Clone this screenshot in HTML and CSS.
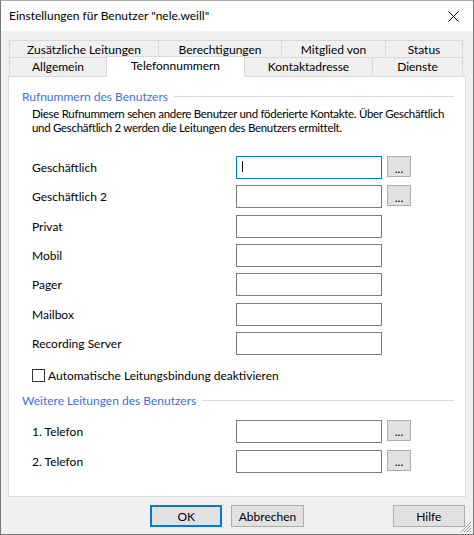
FILE: index.html
```html
<!DOCTYPE html>
<html lang="de">
<head>
  <meta charset="UTF-8" />
  <title>Einstellungen für Benutzer</title>
  <link rel="stylesheet" href="styles.css">
</head>
<body>

  <div class="dialog">

    <!-- Title bar -->
    <header class="titlebar">
      <span class="title">Einstellungen für Benutzer "nele.weill"</span>
      <button class="close" type="button" aria-label="Schließen">
        <svg width="11" height="11" viewBox="0 0 11 11">
          <path d="M0.5 0.5 L10.5 10.5 M10.5 0.5 L0.5 10.5" stroke="#000" stroke-width="1" fill="none" />
        </svg>
      </button>
    </header>

    <div class="dialog-body">

      <!-- Tabs -->
      <div class="tabs">
        <div class="tab-row row-back">
          <div class="tab">Zusätzliche Leitungen</div>
          <div class="tab">Berechtigungen</div>
          <div class="tab">Mitglied von</div>
          <div class="tab">Status</div>
        </div>
        <div class="tab-row row-front">
          <div class="tab">Allgemein</div>
          <div class="tab active">Telefonnummern</div>
          <div class="tab">Kontaktadresse</div>
          <div class="tab">Dienste</div>
        </div>
      </div>

      <!-- Tab page -->
      <section class="panel">
        <div class="group-title"><span>Rufnummern des Benutzers</span></div>
        <p class="hint">Diese Rufnummern sehen andere Benutzer und föderierte Kontakte. Über Geschäftlich<br>und Geschäftlich 2 werden die Leitungen des Benutzers ermittelt.</p>

        <div class="fields">
          <div class="field">
            <label>Geschäftlich</label>
            <div class="input focused"><span class="caret"></span></div>
            <button class="more" type="button">...</button>
          </div>
          <div class="field">
            <label>Geschäftlich 2</label>
            <div class="input"></div>
            <button class="more" type="button">...</button>
          </div>
          <div class="field">
            <label>Privat</label>
            <div class="input"></div>
          </div>
          <div class="field">
            <label>Mobil</label>
            <div class="input"></div>
          </div>
          <div class="field">
            <label>Pager</label>
            <div class="input"></div>
          </div>
          <div class="field">
            <label>Mailbox</label>
            <div class="input"></div>
          </div>
          <div class="field">
            <label>Recording Server</label>
            <div class="input"></div>
          </div>
        </div>

        <div class="check">
          <span class="box"></span>
          <span>Automatische Leitungsbindung deaktivieren</span>
        </div>

        <div class="group-title second"><span>Weitere Leitungen des Benutzers</span></div>

        <div class="fields lines">
          <div class="field">
            <label>1. Telefon</label>
            <div class="input"></div>
            <button class="more" type="button">...</button>
          </div>
          <div class="field">
            <label>2. Telefon</label>
            <div class="input"></div>
            <button class="more" type="button">...</button>
          </div>
        </div>
      </section>

      <!-- Buttons -->
      <footer class="actions">
        <button class="btn default" type="button">OK</button>
        <button class="btn" type="button">Abbrechen</button>
        <button class="btn help" type="button">Hilfe</button>
      </footer>
    </div>

    <svg class="grip" width="12" height="12" viewBox="0 0 12 12">
      <path d="M11 1 L1 11 M11 4 L4 11 M11 7 L7 11 M11 10 L10 11" stroke="#a0a0a0" stroke-width="1" fill="none" />
    </svg>
  </div>

</body>
</html>
```

FILE: styles.css
```css
body {
  margin: 0;
  font-family: 'Lato', 'Noto Sans', sans-serif;
  font-size: 12px;
  color: #000;
  background: #f0f0f0;
}

.dialog {
  position: relative;
  width: 474px;
  height: 535px;
  box-sizing: border-box;
  border: 1px solid #777;
  border-top-color: #aaa;
  background: #f0f0f0;
  display: flex;
  flex-direction: column;
}

/* Title bar */
.titlebar {
  height: 30px;
  background: #fff;
  display: flex;
  align-items: center;
  justify-content: space-between;
  padding: 0 0 0 8px;
  flex-shrink: 0;
}

.title {
  padding-bottom: 1px;
}

.close {
  background: none;
  border: none;
  width: 46px;
  height: 30px;
  padding: 0 0 0 6px;
  display: flex;
  align-items: center;
  justify-content: center;
}

.dialog-body {
  padding: 9px 8px 0 7px;
  display: flex;
  flex-direction: column;
}

/* Tabs */
.tabs {
  padding-left: 1px;
}

.tab-row {
  display: grid;
  width: 454px;
}

.row-back {
  grid-template-columns: 150px 123px 104px 77px;
  height: 17px;
}

.row-front {
  grid-template-columns: 98px 138px 128px 90px;
  height: 19px;
}

.tab {
  box-sizing: border-box;
  border: 1px solid #d9d9d9;
  border-bottom: none;
  margin-left: -1px;
  background: #f0f0f0;
  text-align: center;
  line-height: 18px;
  white-space: nowrap;
}

.row-back .tab {
  line-height: 17px;
}

.tab:first-child {
  margin-left: 0;
}

.tab.active {
  position: relative;
  z-index: 1;
  background: #fff;
  margin-top: -1px;
  margin-bottom: -1px;
  line-height: 17px;
  height: 21px;
}

/* Tab page */
.panel {
  box-sizing: border-box;
  width: 458px;
  height: 421px;
  background: #fff;
  border: 1px solid #d9d9d9;
  padding: 11px 11px 0 13px;
}

.group-title {
  display: flex;
  align-items: center;
  gap: 6px;
  color: #3c6fe5;
  height: 16px;
}

.group-title::after {
  content: "";
  flex: 1;
  height: 1px;
  background: #d4dce6;
}

.hint {
  margin: 3px 0 0 10px;
  font-size: 11.5px;
  line-height: 14px;
  letter-spacing: -0.3px;
  white-space: nowrap;
}

.fields {
  display: flex;
  flex-direction: column;
  gap: 6.33px;
  margin-top: 21px;
  padding-left: 10px;
}

.field {
  display: flex;
  align-items: center;
  height: 23px;
}

.field label {
  width: 204px;
}

.input {
  box-sizing: border-box;
  width: 146px;
  height: 23px;
  border: 1px solid #7a7a7a;
  background: #fff;
  display: flex;
  align-items: center;
  padding-left: 5px;
}

.input.focused {
  border-color: #0078d7;
}

.caret {
  width: 1px;
  height: 11px;
  background: #000;
  margin-bottom: 2px;
}

.more {
  box-sizing: border-box;
  width: 24px;
  height: 21px;
  margin-left: 5px;
  padding: 4px 0 0;
  border: 1px solid #adadad;
  background: #e1e1e1;
  font-family: 'Lato', 'Noto Sans', sans-serif;
  font-size: 12px;
  line-height: 12px;
  color: #000;
  align-self: flex-start;
}

.check {
  display: flex;
  align-items: center;
  gap: 3px;
  margin: 13px 0 0 10px;
}

.box {
  box-sizing: border-box;
  width: 13px;
  height: 13px;
  border: 1px solid #333;
  background: #fff;
}

.group-title.second {
  margin-top: 10px;
}

.fields.lines {
  margin-top: 11px;
  gap: 7px;
}

/* Dialog buttons */
.actions {
  display: flex;
  padding: 8px 0 0 142px;
  gap: 9px;
}

.btn {
  box-sizing: border-box;
  width: 73px;
  height: 22px;
  border: 1px solid #adadad;
  background: #e1e1e1;
  font-family: 'Lato', 'Noto Sans', sans-serif;
  font-size: 12px;
  color: #000;
  padding: 0;
}

.btn.default {
  border: 2px solid #0078d7;
}

.btn.help {
  margin-left: 80px;
}

.grip {
  position: absolute;
  right: 1px;
  bottom: 1px;
}
```
